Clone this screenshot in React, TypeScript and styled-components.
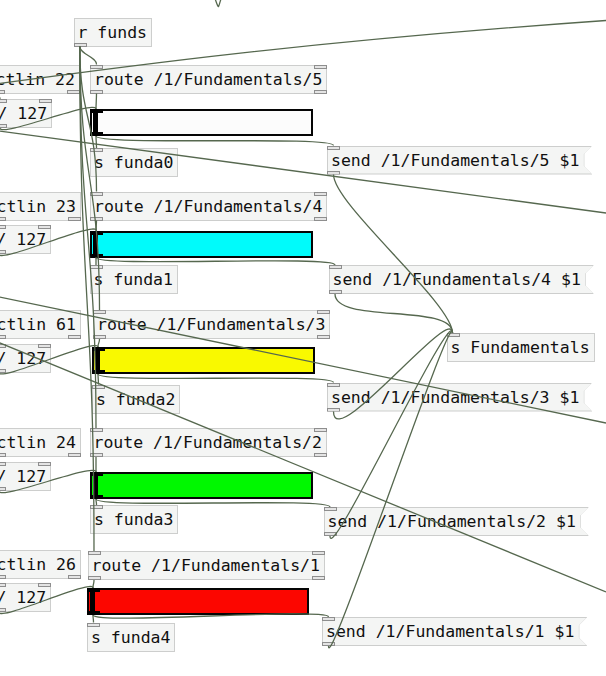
import React from "react";
import styled, { createGlobalStyle } from "styled-components";

const GlobalStyle = createGlobalStyle`
  html, body {
    margin: 0;
    padding: 0;
    background: #ffffff;
  }
  body {
    overflow: hidden;
  }
`;

const Canvas = styled.div`
  position: relative;
  width: 606px;
  height: 676px;
  overflow: hidden;
  background: #ffffff;
  font-family: "DejaVu Sans Mono", "Liberation Mono", monospace;
  font-size: 16.5px;
  color: #101010;
`;

const ObjBox = styled.div<{ $x: number; $y: number }>`
  position: absolute;
  left: ${(p) => p.$x}px;
  top: ${(p) => p.$y}px;
  height: 29px;
  box-sizing: border-box;
  padding: 0 4px 0 3px;
  line-height: 27px;
  white-space: nowrap;
  background: #f4f5f4;
  border: 1px solid #cdcecd;
`;

const MsgBox = styled.div<{ $x: number; $y: number }>`
  position: absolute;
  left: ${(p) => p.$x}px;
  top: ${(p) => p.$y}px;
  height: 29px;
  padding: 0 13px 0 4px;
  line-height: 29px;
  white-space: nowrap;
  background: #cdcecd;
  clip-path: polygon(
    0 0,
    100% 0,
    calc(100% - 8px) 8px,
    calc(100% - 8px) calc(100% - 8px),
    100% 100%,
    0 100%
  );

  &::before {
    content: "";
    position: absolute;
    inset: 1px;
    background: #f4f5f4;
    clip-path: polygon(
      0 0,
      100% 0,
      calc(100% - 7.5px) 7.5px,
      calc(100% - 7.5px) calc(100% - 7.5px),
      100% 100%,
      0 100%
    );
  }
`;

const MsgText = styled.span`
  position: relative;
`;

const Port = styled.span<{ $side: "left" | "right"; $edge: "top" | "bottom"; $off: number }>`
  position: absolute;
  ${(p) => p.$side}: ${(p) => p.$off}px;
  ${(p) => p.$edge}: ${(p) => p.$off}px;
  width: 13px;
  height: 4px;
  box-sizing: border-box;
  background: #e4e4e4;
  border: 1px solid #8e8e8e;
`;

const Slider = styled.div<{ $x: number; $y: number; $w: number; $fill: string }>`
  position: absolute;
  left: ${(p) => p.$x}px;
  top: ${(p) => p.$y}px;
  width: ${(p) => p.$w}px;
  height: 27px;
  box-sizing: border-box;
  border: 2px solid #050505;
  background: ${(p) => p.$fill};
`;

const SliderKnob = styled.span`
  position: absolute;
  left: 1px;
  top: 1px;
  bottom: 1px;
  width: 5px;
  background: #000000;
`;

const SliderPort = styled.span<{ $edge: "top" | "bottom" }>`
  position: absolute;
  left: -2px;
  ${(p) => p.$edge}: -2px;
  width: 13px;
  height: 4px;
  background: #000000;
`;

const Wires = styled.svg`
  position: absolute;
  left: 0;
  top: 0;
  width: 606px;
  height: 676px;
  overflow: visible;
  pointer-events: none;
`;

const Wire = styled.path`
  fill: none;
  stroke: #56684f;
  stroke-width: 1.3;
`;

type PortSpec = "l" | "r";

function PdObj(props: {
  x: number;
  y: number;
  text: string;
  inlets?: PortSpec[];
  outlets?: PortSpec[];
}) {
  return (
    <ObjBox $x={props.x} $y={props.y}>
      {props.text}
      {(props.inlets || []).map((s) => (
        <Port key={"i" + s} $side={s === "l" ? "left" : "right"} $edge="top" $off={-1} />
      ))}
      {(props.outlets || []).map((s) => (
        <Port key={"o" + s} $side={s === "l" ? "left" : "right"} $edge="bottom" $off={-1} />
      ))}
    </ObjBox>
  );
}

function PdMsg(props: { x: number; y: number; text: string }) {
  return (
    <MsgBox $x={props.x} $y={props.y}>
      <MsgText>{props.text}</MsgText>
      <Port $side="left" $edge="top" $off={0} />
      <Port $side="left" $edge="bottom" $off={0} />
    </MsgBox>
  );
}

function HSlider(props: { x: number; y: number; w: number; fill: string }) {
  return (
    <Slider $x={props.x} $y={props.y} $w={props.w} $fill={props.fill}>
      <SliderKnob />
      <SliderPort $edge="top" />
      <SliderPort $edge="bottom" />
    </Slider>
  );
}

interface Row {
  ctl: number;
  ctlX: number;
  ctlY: number;
  divX: number;
  divY: number;
  routeX: number;
  routeY: number;
  slX: number;
  slY: number;
  slW: number;
  fill: string;
  sX: number;
  sY: number;
  msgX: number;
  msgY: number;
  n: number;
}

const rows: Row[] = [
  { ctl: 22, ctlX: -8.5, ctlY: 65, divX: -6.5, divY: 99, routeX: 90, routeY: 64.5, slX: 90, slY: 109, slW: 223, fill: "#fcfcfc", sX: 90, sY: 148, msgX: 327, msgY: 145.5, n: 5 },
  { ctl: 23, ctlX: -7.5, ctlY: 191.5, divX: -7.5, divY: 225, routeX: 90, routeY: 191.5, slX: 90, slY: 230.5, slW: 223, fill: "#00fbfb", sX: 89.5, sY: 265, msgX: 328.5, msgY: 265, n: 4 },
  { ctl: 61, ctlX: -7.5, ctlY: 310, divX: -7.5, divY: 343.5, routeX: 93, routeY: 310, slX: 92, slY: 347, slW: 223, fill: "#f9f900", sX: 92, sY: 384.5, msgX: 327, msgY: 382.5, n: 3 },
  { ctl: 24, ctlX: -7.5, ctlY: 428, divX: -7.5, divY: 462, routeX: 89.5, routeY: 428, slX: 90, slY: 472, slW: 223, fill: "#00f800", sX: 90, sY: 505, msgX: 323.5, msgY: 507, n: 2 },
  { ctl: 26, ctlX: -7.5, ctlY: 550, divX: -7.5, divY: 583, routeX: 87.5, routeY: 551, slX: 87, slY: 588, slW: 222, fill: "#fc0600", sX: 87, sY: 622.5, msgX: 322, msgY: 617, n: 1 },
];

const FUND_IN = { x: 452.5, y: 333 };
const RFUNDS_OUT = { x: 79.8, y: 46.5 };

// pd-l2ork style bezier between an outlet and an inlet
const curve = (x1: number, y1: number, x2: number, y2: number, d1: number, d2 = d1) =>
  `M${x1} ${y1}C${x1} ${y1 + d1} ${x2} ${y2 - d2} ${x2} ${y2}`;

function rowWires(r: Row, i: number): string[] {
  const slIn = { x: r.slX + 6, y: r.slY };
  const slOut = { x: r.slX + 6, y: r.slY + 27 };
  const dy = r.routeY - RFUNDS_OUT.y;
  return [
    curve(r.ctlX + 6.5, r.ctlY + 29, r.divX + 6.5, r.divY, 3),
    curve(r.divX + 6.5, r.divY + 29, slIn.x, slIn.y, 10),
    curve(RFUNDS_OUT.x, RFUNDS_OUT.y, r.routeX + 6.5, r.routeY, i === 0 ? 8 : dy / 2),
    curve(r.routeX + 6.5, r.routeY + 29, slIn.x, slIn.y, 5),
    curve(slOut.x, slOut.y, r.sX + 6.5, r.sY, 4),
    curve(slOut.x, slOut.y, r.msgX + 6.5, r.msgY, 10),
    curve(r.msgX + 6.5, r.msgY + 29, FUND_IN.x, FUND_IN.y, r.n === 3 ? 42 : 30, 30),
  ];
}

// wires coming in from objects outside the visible part of the canvas
const strayWires = [
  "M-12 85C120 67 300 42 606 20.5",
  "M-5 130.5L606 213",
  "M-5 296L606 423",
  "M-5 341L606 592",
  "M214.5 -3C216.5 3 218 7 218.5 6.5C219 6 220 2 221.5 -3",
];

export default function App() {
  return (
    <>
      <GlobalStyle />
      <Canvas>
        <PdObj x={73.5} y={17.5} text="r funds" outlets={["l"]} />
        {rows.map((r) => (
          <React.Fragment key={r.n}>
            <PdObj x={r.ctlX} y={r.ctlY} text={`ctlin ${r.ctl}`} outlets={["l", "r"]} />
            <PdObj x={r.divX} y={r.divY} text="/ 127" inlets={["l", "r"]} outlets={["l"]} />
            <PdObj
              x={r.routeX}
              y={r.routeY}
              text={`route /1/Fundamentals/${r.n}`}
              inlets={["l", "r"]}
              outlets={["l", "r"]}
            />
            <HSlider x={r.slX} y={r.slY} w={r.slW} fill={r.fill} />
            <PdObj x={r.sX} y={r.sY} text={`s funda${5 - r.n}`} inlets={["l"]} />
            <PdMsg x={r.msgX} y={r.msgY} text={`send /1/Fundamentals/${r.n} $1`} />
          </React.Fragment>
        ))}
        <PdObj x={446.5} y={333} text="s Fundamentals" inlets={["l"]} />
        <Wires viewBox="0 0 606 676">
          {rows.flatMap((r, i) => rowWires(r, i)).map((d, k) => (
            <Wire key={k} d={d} />
          ))}
          {strayWires.map((d, k) => (
            <Wire key={"s" + k} d={d} />
          ))}
        </Wires>
      </Canvas>
    </>
  );
}
